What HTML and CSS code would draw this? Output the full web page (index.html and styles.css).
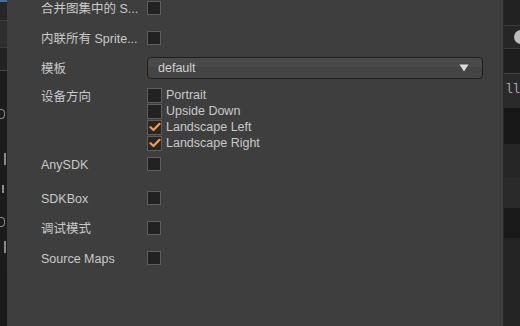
FILE: index.html
```html
<!DOCTYPE html>
<html>
<head>
<meta charset="utf-8">
<link rel="stylesheet" href="styles.css">
</head>
<body>
<div class="screen">
  <div class="side side-left">
    <div class="sl-blue"></div>
    <div class="sl-a"></div>
    <div class="sl-b"></div>
    <div class="sl-c"></div>
    <div class="sl-d"><i class="mark m-c"></i></div>
    <div class="sl-e"><i class="mark m-bar"></i></div>
    <div class="sl-f"><i class="mark m-bar short"></i></div>
    <div class="sl-g"><i class="mark m-c"></i></div>
    <div class="sl-h"><i class="mark m-bar"></i></div>
    <div class="sl-i"></div>
  </div>
  <div class="panel">
    <div class="row r1">
      <div class="label">合并图集中的 S...</div>
      <span class="cb"></span>
    </div>
    <div class="row r2">
      <div class="label">内联所有 Sprite...</div>
      <span class="cb"></span>
    </div>
    <div class="row r3">
      <div class="label">模板</div>
      <div class="select">
        <span class="sel-text">default</span>
        <svg class="caret" width="10" height="8" viewBox="0 0 10 8"><path d="M0.5 0.5 L9.5 0.5 L5 7.5 Z" fill="#dcdcdc"/></svg>
      </div>
    </div>
    <div class="row r4">
      <div class="label">设备方向</div>
      <div class="opts">
        <div class="opt"><span class="cb"></span><span class="opt-text">Portrait</span></div>
        <div class="opt"><span class="cb"></span><span class="opt-text">Upside Down</span></div>
        <div class="opt"><span class="cb on"><svg width="12" height="10" viewBox="0 0 12 10"><path d="M1.5 5.2 L4.5 8 L10.5 1.8" fill="none" stroke="#f0a04b" stroke-width="2.2" stroke-linecap="round" stroke-linejoin="round"/></svg></span><span class="opt-text">Landscape Left</span></div>
        <div class="opt"><span class="cb on"><svg width="12" height="10" viewBox="0 0 12 10"><path d="M1.5 5.2 L4.5 8 L10.5 1.8" fill="none" stroke="#f0a04b" stroke-width="2.2" stroke-linecap="round" stroke-linejoin="round"/></svg></span><span class="opt-text">Landscape Right</span></div>
      </div>
    </div>
    <div class="row r5">
      <div class="label">AnySDK</div>
      <span class="cb"></span>
    </div>
    <div class="row r6">
      <div class="label">SDKBox</div>
      <span class="cb"></span>
    </div>
    <div class="row r7">
      <div class="label">调试模式</div>
      <span class="cb"></span>
    </div>
    <div class="row r8">
      <div class="label">Source Maps</div>
      <span class="cb"></span>
    </div>
  </div>
  <div class="side side-right">
    <div class="sr-a"></div>
    <div class="sr-b"><span class="knob"></span></div>
    <div class="sr-c"></div>
    <div class="sr-d"><span>ll</span></div>
    <div class="sr-e"></div>
    <div class="sr-f"></div>
    <div class="sr-g"></div>
    <div class="sr-h"></div>
    <div class="sr-i"></div>
  </div>
</div>
</body>
</html>
```
FILE: styles.css
```css
html, body {
  margin: 0;
  padding: 0;
  background: #1d1d1d;
  overflow: hidden;
}
.screen {
  display: flex;
  width: 520px;
  height: 326px;
  font-family: "Liberation Sans", "Noto Sans CJK SC", sans-serif;
  font-size: 12.5px;
  color: #c9c9c9;
}
.side {
  display: flex;
  flex-direction: column;
  overflow: hidden;
}
.side-left {
  width: 7px;
  background: #1b1b1b;
}
.sl-blue { height: 2px; background: #3f6d9e; }
.sl-a { height: 18px; background: #262626; }
.sl-b { height: 26px; background: #2e2e2e; border-top: 1px solid #3a3a3a; border-bottom: 1px solid #3a3a3a; }
.sl-c { height: 22px; background: #222; }
.sl-d { height: 78px; background: #1c1c1c; border-top: 1px solid #444; position: relative; }
.sl-e, .sl-f, .sl-g, .sl-h { position: relative; }
.sl-e { height: 28px; }
.sl-f { height: 30px; }
.sl-g { height: 30px; }
.sl-h { height: 30px; }
.mark { position: absolute; display: block; }
.m-c { left: 0; top: 38px; width: 4px; height: 8px; border: 1px solid #8a8a8a; border-left: none; border-radius: 0 4px 4px 0; }
.sl-g .m-c { top: 10px; }
.m-bar { left: 4px; top: 4px; width: 2px; height: 12px; background: #8a8a8a; }
.m-bar.short { left: 2px; height: 8px; top: 8px; }
.sl-i { flex: 1; background: #1a1a1a; }

.panel {
  width: 497px;
  background: #3e3e3e;
  border-right: 1px solid #2a2a2a;
  padding: 1px 0 0 34px;
  box-sizing: border-box;
  display: flex;
  flex-direction: column;
}
.row {
  display: flex;
  align-items: center;
  height: 14px;
  line-height: 14px;
}
.label {
  width: 106px;
  flex: none;
  white-space: nowrap;
  overflow: hidden;
  height: 16px;
  line-height: 16px;
  margin-top: 2px;
}
.r2 { margin-top: 16px; }
.r3 { margin-top: 12px; height: 22px; }
.r4 { margin-top: 8px; align-items: flex-start; height: 64px; }
.r5 { margin-top: 6px; }
.r6 { margin-top: 20px; }
.r7 { margin-top: 16px; }
.r8 { margin-top: 16px; }

.cb {
  width: 14px;
  height: 14px;
  box-sizing: border-box;
  background: #222222;
  border: 1px solid #5e5e5e;
  flex: none;
  display: flex;
  align-items: center;
  justify-content: center;
}
.cb.on { background: #2a2520; }
.opts { display: flex; flex-direction: column; }
.opt {
  display: flex;
  align-items: center;
  height: 16px;
}
.opt .cb { height: 15px; width: 15px; }
.opt-text { margin-left: 4px; line-height: 16px; }

.select {
  width: 336px;
  height: 22px;
  box-sizing: border-box;
  border: 1px solid #1f1f1f;
  border-radius: 4px;
  background: linear-gradient(#4a4a4a 0, #4a4a4a 45%, #444444 45%, #444444 100%);
  display: flex;
  align-items: center;
  padding: 0 8px 0 10px;
  color: #d0d0d0;
}
.sel-text { flex: 1; }
.caret { margin-right: 5px; }

.side-right {
  flex: 1;
  background: #1c1c1c;
}
.sr-a { height: 25px; background: #222; }
.sr-b { height: 22px; background: #262626; border-top: 1px solid #3a3a3a; border-bottom: 1px solid #3a3a3a; position: relative; }
.sr-b .knob { position: absolute; left: 10px; top: 4px; width: 14px; height: 14px; border-radius: 50%; background: #bdbdbd; }
.sr-c { height: 24px; background: #1e1e1e; border-bottom: 1px solid #444; }
.sr-d { height: 34px; background: #2a2a2a; font-family: "DejaVu Sans Mono", monospace; color: #aaa; font-size: 12px; padding-left: 2px; line-height: 30px; }
.sr-e { height: 36px; background: #181818; }
.sr-f { height: 34px; background: #262626; }
.sr-g { height: 30px; background: #2a2a2a; }
.sr-h { height: 30px; background: #1a1a1a; }
.sr-i { flex: 1; background: #242424; }
```
